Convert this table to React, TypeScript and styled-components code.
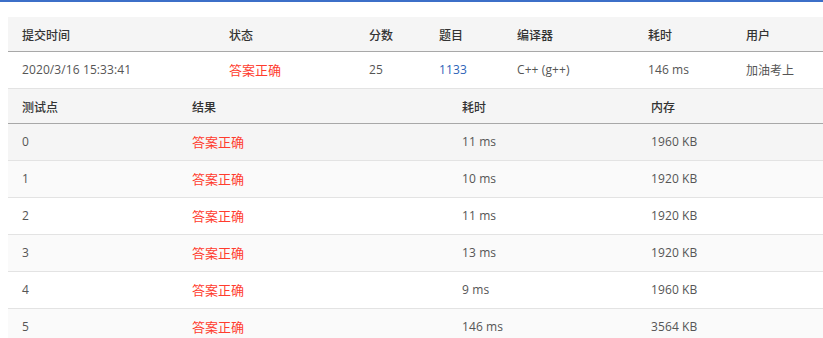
import React from "react";
import styled, { createGlobalStyle } from "styled-components";

const Global = createGlobalStyle`
  html, body { margin: 0; padding: 0; background: #fff; overflow: hidden; }
  body { font-family: "Open Sans", "Noto Sans CJK SC", sans-serif; }
`;

const Page = styled.div`
  width: 823px;
  height: 338px;
  overflow: hidden;
  border-top: 2px solid #3c6fc8;
  box-sizing: border-box;
  padding: 15px 0 0 8px;
`;

const Table = styled.div`
  display: flex;
  flex-direction: column;
`;

const Row = styled.div<{ $cols: string; $bg: string; $h: number; $border: string }>`
  display: grid;
  grid-template-columns: ${(p) => p.$cols};
  align-items: center;
  height: ${(p) => p.$h}px;
  padding-left: 14px;
  background: ${(p) => p.$bg};
  border-bottom: 1px solid ${(p) => p.$border};
  font-size: 12px;
  color: #555;
  white-space: nowrap;
`;

const Head = styled.div`
  font-size: 12px;
  font-weight: 500;
  color: #333;
  font-family: "Noto Sans CJK SC", sans-serif;
`;

const Cell = styled.div<{ $color?: string; $cjk?: boolean; $size?: number }>`
  color: ${(p) => p.$color || "#555"};
  font-size: ${(p) => p.$size || 12}px;
  font-family: ${(p) => (p.$cjk ? '"Noto Sans CJK SC", sans-serif' : '"Open Sans", "Noto Sans CJK SC", sans-serif')};
  letter-spacing: ${(p) => (p.$cjk ? "0" : "0.1px")};
  line-height: 1;
  padding-bottom: ${(p) => (p.$cjk ? "1px" : "0")};
`;

const mainCols = "207px 140px 70px 78px 131px 98px 1fr";
const subCols = "170px 270px 189px 1fr";

const RED = "#ff3c2e";
const BLUE = "#2d63b8";

const cases = [
  ["0", "11 ms", "1960 KB"],
  ["1", "10 ms", "1920 KB"],
  ["2", "11 ms", "1920 KB"],
  ["3", "13 ms", "1920 KB"],
  ["4", "9 ms", "1960 KB"],
  ["5", "146 ms", "3564 KB"],
];

const rowBg = (i: number) => (i === 0 ? "#f5f5f5" : i % 2 === 1 ? "#fafafa" : "#ffffff");

export default function App() {
  return (
    <>
      <Global />
      <Page>
        <Table>
          <Row $cols={mainCols} $bg="#f5f5f5" $h={34} $border="#a8a8a8">
            <Head>提交时间</Head>
            <Head>状态</Head>
            <Head>分数</Head>
            <Head>题目</Head>
            <Head>编译器</Head>
            <Head>耗时</Head>
            <Head>用户</Head>
          </Row>
          <Row $cols={mainCols} $bg="#ffffff" $h={36} $border="#e3e3e3">
            <Cell>2020/3/16 15:33:41</Cell>
            <Cell $cjk $size={13} $color={RED}>答案正确</Cell>
            <Cell>25</Cell>
            <Cell $color={BLUE}>1133</Cell>
            <Cell>C++ (g++)</Cell>
            <Cell>146 ms</Cell>
            <Cell $cjk $size={12}>加油考上</Cell>
          </Row>
          <Row $cols={subCols} $bg="#f5f5f5" $h={34} $border="#a8a8a8">
            <Head>测试点</Head>
            <Head>结果</Head>
            <Head>耗时</Head>
            <Head>内存</Head>
          </Row>
          {cases.map((c, i) => (
            <Row key={c[0]} $cols={subCols} $bg={rowBg(i)} $h={36} $border="#e3e3e3">
              <Cell>{c[0]}</Cell>
              <Cell $cjk $size={13} $color={RED}>答案正确</Cell>
              <Cell>{c[1]}</Cell>
              <Cell>{c[2]}</Cell>
            </Row>
          ))}
        </Table>
      </Page>
    </>
  );
}
